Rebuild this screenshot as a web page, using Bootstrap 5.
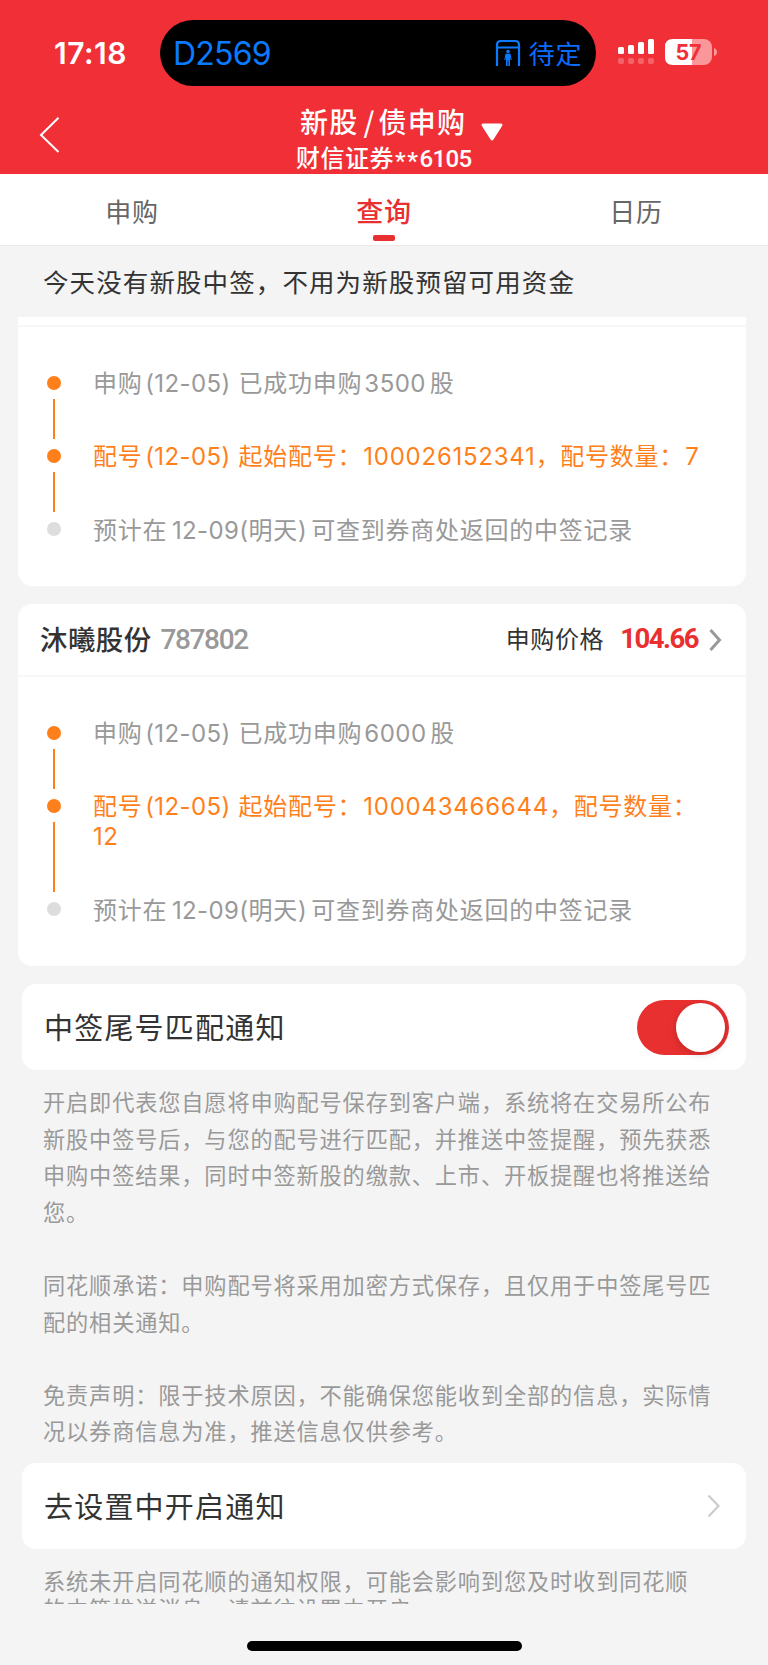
<!DOCTYPE html>
<html lang="zh-CN">
<head>
<meta charset="utf-8">
<meta name="viewport" content="width=device-width, initial-scale=1">
<title>新股/债申购</title>
<link href="https://cdn.jsdelivr.net/npm/bootstrap@5.3.0/dist/css/bootstrap.min.css" rel="stylesheet">
<style>
body{font-family:"Noto Sans CJK SC",sans-serif;background:#f4f4f4;color:#333;height:1665px;overflow:hidden}
.app-head{background:#f12f37;height:174px;color:#fff}
.status-row{height:100px;padding:20px 46px 0 54px}
.clock{width:106px;flex:none;font:600 30px/66px Inter,sans-serif;letter-spacing:.5px}
.island{width:436px;flex:none;height:66px;border-radius:33px;background:#000;color:#0a7aff;padding:0 14px 0 13px}
.train{font:400 32px/66px Inter,sans-serif;letter-spacing:-.8px;margin-top:2px}
.gate{margin-right:8px}
.wait{font-size:26px;line-height:64px;letter-spacing:.6px;color:#0a6cff}
.signal{margin:19px 0 0 22px}
.title-row{height:74px}
.back{width:296px;flex:none;padding:17px 0 0 39px}
.title-main{font-size:28px;font-weight:500;line-height:36px;letter-spacing:1.2px;padding-left:4px;margin-top:3px}
.slash{padding:0 3px 0 5px}
.title-sub{font-size:24px;font-weight:500;line-height:32px;letter-spacing:.5px;margin-top:-2px}
.title-sub .din{letter-spacing:-.6px;font-weight:500}
.title-sub .stars{letter-spacing:1.6px;vertical-align:-2px;line-height:0;margin-left:1px}
.din{font-family:Roboto,sans-serif;font-weight:500}
.tab-row{height:72px;background:#fff;padding:0 6px;border-bottom:1px solid #e9e9e9}
.tab-item{font-size:26px;line-height:74px;letter-spacing:.8px;color:#666}
.tab-item.on{color:#e93030;font-weight:500;position:relative;font-size:27px}
.tab-item.on::after{content:"";position:absolute;left:50%;bottom:4px;width:22px;height:6px;margin-left:-11px;border-radius:2px;background:#e93030}
.notice{height:71px;line-height:70px;padding-left:43px;font-size:25.5px;letter-spacing:1.1px}
.panel{background:#fff;border-radius:14px;margin:0 22px 0 18px}
.panel.cut{border-radius:0 0 14px 14px;height:269px}
.cut-line{height:10px;border-bottom:2px solid #f7f7f7}
.stock{height:362px;margin-top:18px}
.stock-head{height:73px;border-bottom:2px solid #f7f7f7;padding:0 24px 0 22px}
.name{font-size:27.4px;font-weight:500;letter-spacing:.5px;line-height:68px;margin-top:-3px}
.code{font-size:28px;color:#999;letter-spacing:-1.4px;margin-left:9px;line-height:72px}
.plabel{font-size:24px;letter-spacing:.6px;line-height:67px;margin-top:-4px}
.price{font-size:27.5px;font-weight:700;color:#e93030;letter-spacing:-1.5px;margin:-2px 11px 0 16px;line-height:70px}
.steps{padding:40px 0 0 28.7px}
.step-line{color:#999;font-size:24px;line-height:30px;letter-spacing:.75px}
.rail{width:14px;flex:none;margin-right:32.3px}
.dot{width:14px;height:14px;flex:none;border-radius:50%;background:#ff7f1a;margin-top:8.5px}
.dot.idle{background:#ddd}
.stem{width:2.3px;background:#ff7f1a;margin:9px 0 1.5px;flex:1}
.body-text{padding-bottom:43.3px}
.hot{color:#ff7f1a}
.lat{font-family:Inter,sans-serif;font-size:24px;letter-spacing:.4px;line-height:0}
.date{margin-left:-4.5px;margin-right:.8px}
.num{letter-spacing:.75px;margin-left:1px}
.qty{margin-left:2px;letter-spacing:.5px;margin-right:-2.4px}
.due{margin-left:-2.5px}
.close-p{margin-right:-3px}
.setting{height:86px;margin:18px 22px 0;background:#fff;border-radius:14px;padding:0 17px 0 22px;font-size:29px;letter-spacing:1.2px}
.setting span{margin-top:-1px}
.toggle{width:92px;height:55px;border-radius:28px;background:#e93030;padding:3px 4px}
.knob{width:49px;height:49px;border-radius:50%;background:#fff;box-shadow:0 2px 8px rgba(0,0,0,.18)}
.desc{margin:13px 0 0 43px;font-size:22.2px;letter-spacing:.86px;line-height:36.6px;color:#999}
.desc p{margin:0 0 36.6px}
.desc p:last-child{margin:0}
.setting.go{margin-top:14px}
.tail{line-height:28px;margin-top:17px;height:38px;overflow:hidden}
.home{width:275px;height:10px;border-radius:5px;background:#000;margin:37px auto 0}
svg{display:block;flex:none}
.caret{margin:20px 0 0 14px}
</style>
</head>
<body>
<header class="app-head">
  <div class="status-row d-flex">
    <div class="clock">17:18</div>
    <div class="island d-flex align-items-center">
      <span class="train me-auto">D2569</span>
      <svg class="gate" width="26" height="28" viewBox="0 0 26 28" fill="none" stroke="#0a7aff" stroke-width="2.2"><path d="M2 27V6Q2 2 6 2H20Q24 2 24 6V27M2 8.500H24"/><g fill="#0a7aff" stroke="none"><circle cx="13" cy="12.5" r="1.7"/><path d="M10.5 14.8H15.500L16.700 21H15.700L15 18V27H13.400V21.500H12.600V27H11V18L10.300 21H9.300Z"/></g></svg>
      <span class="wait">待定</span>
    </div>
    <svg class="signal" width="102" height="28" viewBox="0 0 102 28">
      <g fill="#fff"><rect x="0" y="8" width="6" height="7" rx="1.5"/><rect x="10" y="6" width="6" height="9" rx="1.5"/><rect x="20" y="3" width="6" height="12" rx="1.500"/><rect x="30" y="0" width="6" height="15" rx="1.500"/></g>
      <g fill="#fff" opacity=".25"><rect x="0" y="19" width="6" height="6" rx="2"/><rect x="10" y="19" width="6" height="6" rx="2"/><rect x="20" y="19" width="6" height="6" rx="2"/><rect x="30" y="19" width="6" height="6" rx="2"/></g>
      <rect x="47" y="0" width="47" height="26" rx="8" fill="#f9979b"/><path d="M74 0V26H55Q47 26 47 18V8Q47 0 55 0Z" fill="#fff"/><path d="M96 9Q99 10 99 13T96 17Z" fill="#f9979b"/>
      <text x="70.500" y="20.500" text-anchor="middle" font-family="Inter" font-size="21.500" font-weight="700" fill="#f12f37">57</text>
    </svg>
  </div>
  <div class="title-row d-flex">
    <div class="back"><svg width="22" height="36" viewBox="0 0 22 36" fill="none" stroke="#fff" stroke-width="2"><path d="M19.500 .8L2 18L19.500 35"/></svg></div>
    <div>
      <div class="title-main d-flex text-nowrap">新股<span class="slash">/</span>债申购
        <svg class="caret" width="24" height="20" viewBox="0 0 24 20"><path d="M3 2H21L12 16Z" fill="#fff" stroke="#fff" stroke-width="3" stroke-linejoin="round"/></svg></div>
      <div class="title-sub text-nowrap">财信证券<span class="din stars">**</span><span class="din">6105</span></div>
    </div>
  </div>
</header>
<nav class="tab-row d-flex text-center">
  <div class="tab-item col">申购</div><div class="tab-item col on">查询</div><div class="tab-item col">日历</div>
</nav>
<div class="notice">今天没有新股中签，不用为新股预留可用资金</div>
<main>
  <section class="panel cut">
    <div class="cut-line"></div>
    <div class="steps">
      <div class="step-line d-flex"><div class="rail d-flex flex-column align-items-center"><i class="dot"></i><i class="stem"></i></div><div class="body-text">申购<span class="lat date"> (12-05) </span>已成功申购<span class="lat qty">3500</span> 股</div></div>
      <div class="step-line hot d-flex"><div class="rail d-flex flex-column align-items-center"><i class="dot"></i><i class="stem"></i></div><div class="body-text">配号<span class="lat date"> (12-05) </span>起始配号：<span class="lat num">100026152341</span>，配号数量：<span class="lat num">7</span></div></div>
      <div class="step-line d-flex"><div class="rail"><i class="dot idle d-block"></i></div><div>预计在<span class="lat due"> 12-09(</span>明天<span class="lat close-p">) </span>可查到券商处返回的中签记录</div></div>
    </div>
  </section>
  <section class="panel stock">
    <div class="stock-head d-flex align-items-center">
      <span class="name">沐曦股份</span><span class="code din me-auto">787802</span>
      <span class="plabel">申购价格</span><span class="price din">104.66</span>
      <svg width="13" height="24" viewBox="0 0 13 24" fill="none" stroke="#999" stroke-width="3"><path d="M1.500 2L10.500 12L1.500 22"/></svg>
    </div>
    <div class="steps">
      <div class="step-line d-flex"><div class="rail d-flex flex-column align-items-center"><i class="dot"></i><i class="stem"></i></div><div class="body-text">申购<span class="lat date"> (12-05) </span>已成功申购<span class="lat qty">6000</span> 股</div></div>
      <div class="step-line hot d-flex"><div class="rail d-flex flex-column align-items-center"><i class="dot"></i><i class="stem"></i></div><div class="body-text">配号<span class="lat date"> (12-05) </span>起始配号：<span class="lat num">100043466644</span>，配号数量：<br><span class="lat">12</span></div></div>
      <div class="step-line d-flex"><div class="rail"><i class="dot idle d-block"></i></div><div>预计在<span class="lat due"> 12-09(</span>明天<span class="lat close-p">) </span>可查到券商处返回的中签记录</div></div>
    </div>
  </section>
  <section class="setting d-flex align-items-center justify-content-between"><span>中签尾号匹配通知</span><div class="toggle d-flex justify-content-end"><div class="knob"></div></div></section>
  <div class="desc text-nowrap">
    <p>开启即代表您自愿将申购配号保存到客户端，系统将在交易所公布<br>新股中签号后，与您的配号进行匹配，并推送中签提醒，预先获悉<br>申购中签结果，同时中签新股的缴款、上市、开板提醒也将推送给<br>您。</p>
    <p>同花顺承诺：申购配号将采用加密方式保存，且仅用于中签尾号匹<br>配的相关通知。</p>
    <p>免责声明：限于技术原因，不能确保您能收到全部的信息，实际情<br>况以券商信息为准，推送信息仅供参考。</p>
  </div>
  <section class="setting go d-flex align-items-center justify-content-between"><span>去设置中开启通知</span><svg width="22" height="24" viewBox="0 0 22 24" fill="none" stroke="#ccc" stroke-width="2.200"><path d="M1.500 1.500L11.500 12L1.500 22.500"/></svg></section>
  <div class="desc tail text-nowrap">系统未开启同花顺的通知权限，可能会影响到您及时收到同花顺<br>的中签推送消息，请前往设置中开启</div>
</main>
<div class="home"></div>
<script src="https://cdn.jsdelivr.net/npm/bootstrap@5.3.0/dist/js/bootstrap.bundle.min.js"></script>
</body>
</html>
